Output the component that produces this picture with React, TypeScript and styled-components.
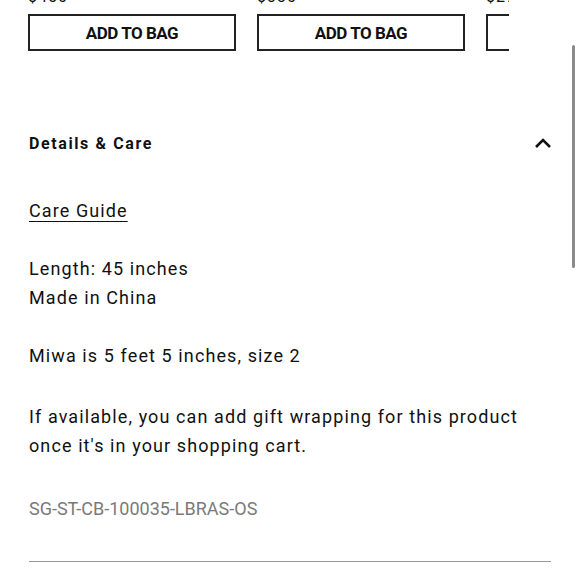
import React from 'react';
import styled, { createGlobalStyle } from 'styled-components';

const GlobalStyle = createGlobalStyle`
  html, body {
    margin: 0;
    padding: 0;
    background: #fff;
    overflow: hidden;
  }
  body {
    font-family: Roboto, 'Liberation Sans', sans-serif;
    color: #111;
  }
`;

const Page = styled.div`
  position: relative;
  width: 580px;
  height: 580px;
  overflow: hidden;
  padding: 0 29px 0 29px;
  box-sizing: border-box;
`;

const Carousel = styled.div`
  width: 481px;
  margin-left: -1px;
  margin-top: -14px;
  overflow: hidden;
`;

const Track = styled.div`
  display: flex;
  gap: 21px;
`;

const Card = styled.div`
  flex: 0 0 208px;
  display: flex;
  flex-direction: column;
  gap: 6px;
`;

const Price = styled.div`
  font-size: 16px;
  line-height: 22px;
  height: 22px;
  letter-spacing: 1px;
  color: #111;
`;

const AddButton = styled.button`
  height: 37px;
  width: 208px;
  border: 2px solid #222;
  background: #fff;
  font-family: Roboto, 'Liberation Sans', sans-serif;
  font-weight: 700;
  font-size: 17px;
  letter-spacing: -0.5px;
  color: #111;
  padding: 0;
`;

const Accordion = styled.section`
  margin-top: 76px;
`;

const Header = styled.div`
  display: flex;
  align-items: center;
  justify-content: space-between;
  height: 32px;
`;

const Title = styled.h3`
  margin: 0;
  font-size: 16px;
  font-weight: 700;
  letter-spacing: 1.6px;
`;

const Chevron = styled.svg`
  width: 18px;
  height: 12px;
  margin-right: -1px;
`;

const Body = styled.div`
  padding-top: 37px;
  font-size: 18px;
  line-height: 29px;
  letter-spacing: 1.1px;
`;

const GuideLink = styled.a`
  color: #111;
  text-decoration: underline;
  text-underline-offset: 4px;
  display: inline-block;
`;

const Para = styled.p<{ gap: number }>`
  margin: ${p => p.gap}px 0 0 0;
`;

const Sku = styled.div`
  margin-top: 39px;
  font-size: 18px;
  line-height: 19px;
  color: #7a7a7a;
  letter-spacing: 0;
`;

const Divider = styled.hr`
  margin: 43px 0 0 0;
  border: none;
  border-top: 1px solid #999;
`;

const ScrollThumb = styled.div`
  position: absolute;
  right: 5px;
  top: 45px;
  width: 3px;
  height: 223px;
  border-radius: 2px;
  background: #8a8a8a;
`;

const products = ['$450', '$330', '$275'];

export default function App() {
  return (
    <>
      <GlobalStyle />
      <Page>
        <Carousel>
          <Track>
            {products.map(p => (
              <Card key={p}>
                <Price>{p}</Price>
                <AddButton>ADD TO BAG</AddButton>
              </Card>
            ))}
          </Track>
        </Carousel>
        <Accordion>
          <Header>
            <Title>Details &amp; Care</Title>
            <Chevron viewBox="0 0 18 12">
              <path d="M2 10 L9 3 L16 10" fill="none" stroke="#111" strokeWidth="2.6" />
            </Chevron>
          </Header>
          <Body>
            <GuideLink href="#">Care Guide</GuideLink>
            <Para gap={29}>
              Length: 45 inches
              <br />
              Made in China
            </Para>
            <Para gap={29}>Miwa is 5 feet 5 inches, size 2</Para>
            <Para gap={32}>
              If available, you can add gift wrapping for this product
              <br />
              once it's in your shopping cart.
            </Para>
            <Sku>SG-ST-CB-100035-LBRAS-OS</Sku>
          </Body>
          <Divider />
        </Accordion>
        <ScrollThumb />
      </Page>
    </>
  );
}
